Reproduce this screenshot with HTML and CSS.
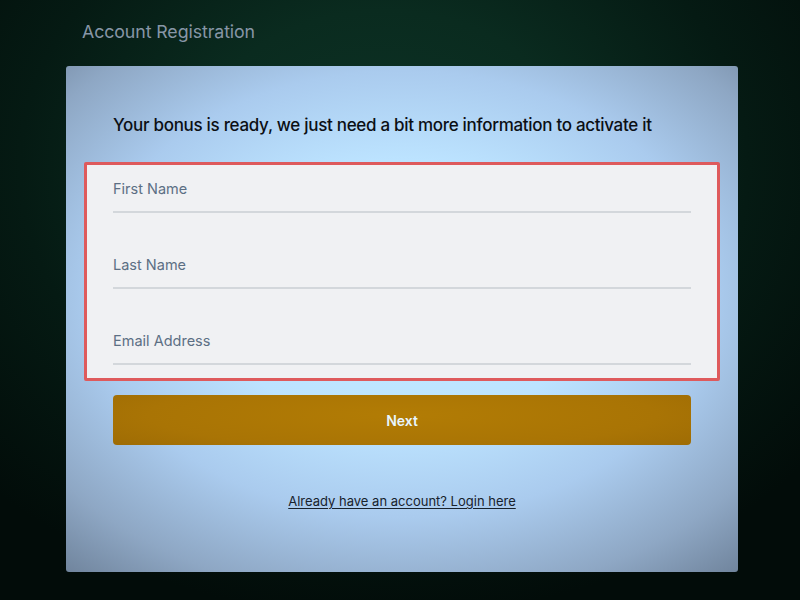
FILE: index.html
```html
<!DOCTYPE html>
<html lang="en">
<head>
<meta charset="utf-8">
<title>Account Registration</title>
<link rel="stylesheet" href="styles.css">
</head>
<body>
<div class="page">
  <h1 class="title">Account Registration</h1>
  <main class="card">
    <p class="lead">Your bonus is ready, we just need a bit more information to activate it</p>
    <form class="form">
      <div class="fields">
        <label class="field"><span class="label">First Name</span><span class="input"></span></label>
        <label class="field"><span class="label">Last Name</span><span class="input"></span></label>
        <label class="field"><span class="label">Email Address</span><span class="input"></span></label>
      </div>
      <button type="button" class="next">Next</button>
    </form>
    <a class="login" href="#">Already have an account? Login here</a>
  </main>
</div>
</body>
</html>
```

FILE: styles.css
```css
* { box-sizing: border-box; }
html, body { margin: 0; height: 100%; }
body {
  font-family: "Inter", "Liberation Sans", sans-serif;
  background: radial-gradient(ellipse 70% 75% at 48% 28%, #0d3326 0%, #0a2b1f 35%, #051a13 65%, #020c09 100%);
  overflow: hidden;
}
.page {
  width: 800px;
  height: 600px;
  padding: 20px 0 0 66px;
}
.title {
  margin: 0 0 22px 16px;
  font-size: 17.8px;
  line-height: 24px;
  font-weight: 400;
  color: #8796a6;
  letter-spacing: -0.1px;
}
.card {
  width: 672px;
  height: 506px;
  border-radius: 3px;
  background: radial-gradient(ellipse 80% 76% at 50% 45%, #c3ebff 0%, #bce3ff 35%, #aacbee 58%, #8ea7c4 80%, #687b92 100%);
  padding: 47px 18px 0;
  display: flex;
  flex-direction: column;
}
.lead {
  margin: 0 0 25px 29px;
  font-size: 17px;
  line-height: 24px;
  font-weight: 500;
  color: #0b0f14;
  letter-spacing: -0.3px;
}
.form {
  display: flex;
  flex-direction: column;
}
.fields {
  border: 3px solid #de5a5c;
  border-radius: 2px;
  background: #f0f1f3;
  padding: 14px 26px 13px;
  display: flex;
  flex-direction: column;
  gap: 42px;
}
.field {
  display: flex;
  flex-direction: column;
}
.label {
  font-size: 14.5px;
  line-height: 20px;
  color: #5c6f84;
}
.input {
  height: 14px;
  border-bottom: 2px solid #d3d7db;
}
.next {
  margin: 14px 29px 0;
  height: 50px;
  border: none;
  border-radius: 4px;
  background: radial-gradient(ellipse 80% 120% at 50% 40%, #b27c05 0%, #a97405 55%, #966503 100%);
  color: #e8f5ff;
  font-family: inherit;
  font-size: 14px;
  font-weight: 600;
  cursor: pointer;
}
.login {
  align-self: center;
  margin-top: 46px;
  font-size: 13px;
  line-height: 20px;
  color: #18222c;
  text-decoration: underline;
  text-underline-offset: 2px;
}
```
